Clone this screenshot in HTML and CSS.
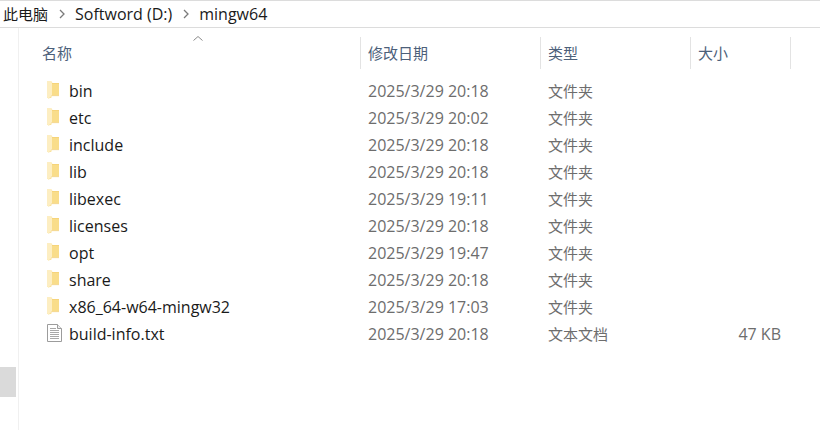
FILE: index.html
```html
<!DOCTYPE html>
<html lang="zh-CN">
<head>
<meta charset="utf-8">
<title>mingw64</title>
<link rel="stylesheet" href="styles.css">
</head>
<body>
<svg class="defs" width="0" height="0" aria-hidden="true">
  <symbol id="folder" viewBox="0 0 13 18">
    <path d="M0 .5h4.500l1 1.500H12v12.500H4.500V16.500L1.500 17.500 0 16.500z" fill="#f9dd8a"/>
    <path d="M0 .5h4.500l.5 1.500v12.500l-3.500 3L0 16.500z" fill="#fdeec2"/>
    <path d="M5 2h7v.6H5z" fill="#f3cf70"/>
    <path d="M4.500 14.500H12v.6H4.500z" fill="#eec768"/>
  </symbol>
  <symbol id="textfile" viewBox="0 0 15 18">
    <path d="M.5 .5h10l4 4v13H.5z" fill="#fff" stroke="#9c9c9c"/>
    <path d="M10.500 .5v4h4" fill="#eee" stroke="#9c9c9c"/>
    <path d="M3 4.500h6M3 6.500h9M3 8.500h9M3 10.500h9M3 12.500h9M3 14.500h9" stroke="#a8a8a8" fill="none"/>
  </symbol>
</svg>
<nav class="crumbs">
  <span class="cjk">此电脑</span>
  <svg class="chev" viewBox="0 0 6 10"><path d="M1 1l4 4-4 4" fill="none" stroke="#7a7a7a" stroke-width="1.3"/></svg>
  <span>Softword (D:)</span>
  <svg class="chev" viewBox="0 0 6 10"><path d="M1 1l4 4-4 4" fill="none" stroke="#7a7a7a" stroke-width="1.3"/></svg>
  <span>mingw64</span>
</nav>
<div class="main">
  <aside class="side"><div class="thumb"></div></aside>
  <section class="list">
    <div class="head">
      <div class="hcell hname">名称<svg class="sort" viewBox="0 0 10 5"><path d="M.5 4.500L5 .5l4.500 4" fill="none" stroke="#8a8a8a"/></svg></div>
      <div class="hcell">修改日期</div>
      <div class="hcell">类型</div>
      <div class="hcell">大小</div>
    </div>
    <div class="rows">
      <div class="row"><svg class="ic"><use href="#folder"/></svg><span class="nm">bin</span><span class="dt">2025/3/29 20:18</span><span class="dt cjk">文件夹</span><span></span></div>
      <div class="row"><svg class="ic"><use href="#folder"/></svg><span class="nm">etc</span><span class="dt">2025/3/29 20:02</span><span class="dt cjk">文件夹</span><span></span></div>
      <div class="row"><svg class="ic"><use href="#folder"/></svg><span class="nm">include</span><span class="dt">2025/3/29 20:18</span><span class="dt cjk">文件夹</span><span></span></div>
      <div class="row"><svg class="ic"><use href="#folder"/></svg><span class="nm">lib</span><span class="dt">2025/3/29 20:18</span><span class="dt cjk">文件夹</span><span></span></div>
      <div class="row"><svg class="ic"><use href="#folder"/></svg><span class="nm">libexec</span><span class="dt">2025/3/29 19:11</span><span class="dt cjk">文件夹</span><span></span></div>
      <div class="row"><svg class="ic"><use href="#folder"/></svg><span class="nm">licenses</span><span class="dt">2025/3/29 20:18</span><span class="dt cjk">文件夹</span><span></span></div>
      <div class="row"><svg class="ic"><use href="#folder"/></svg><span class="nm">opt</span><span class="dt">2025/3/29 19:47</span><span class="dt cjk">文件夹</span><span></span></div>
      <div class="row"><svg class="ic"><use href="#folder"/></svg><span class="nm">share</span><span class="dt">2025/3/29 20:18</span><span class="dt cjk">文件夹</span><span></span></div>
      <div class="row"><svg class="ic"><use href="#folder"/></svg><span class="nm">x86_64-w64-mingw32</span><span class="dt">2025/3/29 17:03</span><span class="dt cjk">文件夹</span><span></span></div>
      <div class="row"><svg class="ic ic-file"><use href="#textfile"/></svg><span class="nm">build-info.txt</span><span class="dt">2025/3/29 20:18</span><span class="dt cjk">文本文档</span><span class="dt size">47 KB</span></div>
    </div>
  </section>
</div>
</body>
</html>
```
FILE: styles.css
```css
* { box-sizing: border-box; }
html, body { margin: 0; height: 100%; }
body {
  width: 820px;
  height: 430px;
  overflow: hidden;
  background: #fff;
  font: 16px/20px "Open Sans", "Noto Sans CJK SC", sans-serif;
  color: #1a1a1a;
  display: flex;
  flex-direction: column;
}
.cjk { font-size: 15px; }
.defs { position: absolute; }
.crumbs {
  height: 28px;
  border-top: 1px solid #dcdcdc;
  border-bottom: 1px solid #dcdcdc;
  padding-left: 3px;
  display: flex;
  align-items: center;
  gap: 10.5px;
}
.chev { width: 6px; height: 10px; }
.main { flex: 1; display: flex; min-height: 0; }
.side {
  width: 19px;
  border-right: 1px solid #f0f0f0;
  padding-top: 339px;
}
.thumb { width: 16px; height: 30px; background: #dadada; }
.list { flex: 1; padding-top: 9px; }
.head {
  display: grid;
  grid-template-columns: 342px 180px 150px 100px;
  height: 32px;
  font-size: 15px;
}
.hcell {
  border-right: 1px solid #e3e3e3;
  padding-left: 7px;
  color: #4c607a;
  line-height: 32px;
}
.hname { padding-left: 23px; position: relative; }
.sort { position: absolute; left: 174px; top: -1px; width: 10px; height: 5px; }
.rows { padding-top: 8px; }
.row {
  display: grid;
  grid-template-columns: 27px 315px 180px 150px 100px;
  height: 27px;
  align-items: center;
}
.ic { width: 13px; height: 18px; margin: 0 0 2px 28px; overflow: visible; }
.ic-file { width: 15px; margin-left: 28px; }
.nm { padding-left: 23px; }
.dt { color: #6d6d6d; padding-left: 7px; }
.size { text-align: right; padding-right: 10px; }
```
